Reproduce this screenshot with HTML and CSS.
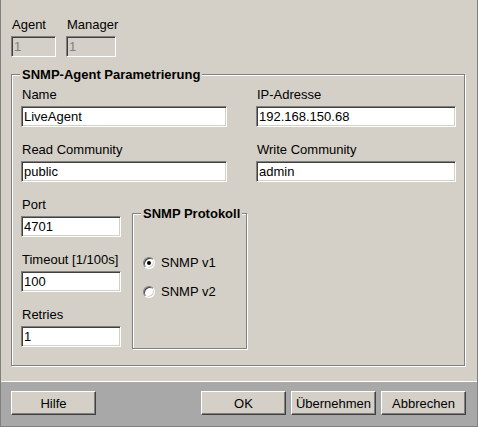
FILE: index.html
```html
<!DOCTYPE html>
<html>
<head>
<meta charset="utf-8">
<link rel="stylesheet" href="styles.css">
</head>
<body>
<div class="window">
  <div class="content">
    <div class="ids">
      <div class="field id-agent">
        <div class="label">Agent</div>
        <input class="input disabled" value="1" readonly>
      </div>
      <div class="field id-manager">
        <div class="label">Manager</div>
        <input class="input disabled" value="1" readonly>
      </div>
    </div>

    <div class="group main-group">
      <div class="group-title">SNMP-Agent Parametrierung</div>
      <div class="pair-grid">
        <div class="field">
          <div class="label">Name</div>
          <input class="input" value="LiveAgent" readonly>
        </div>
        <div class="field">
          <div class="label">IP-Adresse</div>
          <input class="input" value="192.168.150.68" readonly>
        </div>
        <div class="field">
          <div class="label">Read Community</div>
          <input class="input" value="public" readonly>
        </div>
        <div class="field">
          <div class="label">Write Community</div>
          <input class="input" value="admin" readonly>
        </div>
      </div>

      <div class="lower">
        <div class="left-col">
          <div class="field">
            <div class="label">Port</div>
            <input class="input" value="4701" readonly>
          </div>
          <div class="field">
            <div class="label">Timeout [1/100s]</div>
            <input class="input" value="100" readonly>
          </div>
          <div class="field">
            <div class="label">Retries</div>
            <input class="input" value="1" readonly>
          </div>
        </div>

        <div class="group proto-group">
          <div class="group-title">SNMP Protokoll</div>
          <div class="radio-row">
            <span class="radio"><span class="dot"></span></span>
            <span class="radio-label">SNMP v1</span>
          </div>
          <div class="radio-row">
            <span class="radio"></span>
            <span class="radio-label">SNMP v2</span>
          </div>
        </div>
      </div>
    </div>
  </div>

  <div class="buttonbar">
    <button class="btn">Hilfe</button>
    <div class="spacer"></div>
    <button class="btn">OK</button>
    <button class="btn">Übernehmen</button>
    <button class="btn">Abbrechen</button>
  </div>
</div>
</body>
</html>
```

FILE: styles.css
```css
html, body {
  margin: 0;
  padding: 0;
  background: #d4d0c8;
}

body {
  font-family: "Liberation Sans", Arial, sans-serif;
  font-size: 13px;
  color: #000;
}

.window {
  width: 478px;
  height: 427px;
  box-sizing: border-box;
  border-left: 1px solid #808080;
  border-right: 1px solid #808080;
  border-bottom: 1px solid #808080;
  display: flex;
  flex-direction: column;
  background: #d4d0c8;
}

.content {
  height: 381px;
  box-sizing: border-box;
  padding: 17px 0 0 10px;
}

.ids {
  display: flex;
  gap: 10px;
}

.field {
  display: flex;
  flex-direction: column;
}

.label {
  height: 15px;
  line-height: 15px;
  margin-bottom: 4px;
  padding-left: 1px;
  white-space: nowrap;
}

.input {
  height: 21px;
  box-sizing: border-box;
  margin: 0;
  padding: 0 0 0 2px;
  font-family: "Liberation Sans", Arial, sans-serif;
  font-size: 13px;
  color: #000;
  background: #fff;
  border: 1px solid;
  border-color: #808080 #ffffff #ffffff #808080;
  box-shadow: inset 1px 1px 0 #404040, inset -1px -1px 0 #d4d0c8;
  outline: none;
  width: 100%;
}

.input.disabled {
  background: #d4d0c8;
  color: #808080;
}

.id-agent { width: 45px; }
.id-manager { width: 50px; }

.group {
  position: relative;
  box-sizing: border-box;
  border: 1px solid #808080;
  box-shadow: inset 1px 1px 0 #ffffff, 1px 1px 0 #ffffff;
}

.group-title {
  position: absolute;
  top: -8px;
  left: 8px;
  padding: 0 2px;
  line-height: 15px;
  font-weight: bold;
  background: #d4d0c8;
  white-space: nowrap;
}

.main-group {
  margin-top: 17px;
  width: 454px;
  height: 292px;
  padding: 12px 7px 0 9px;
}

.pair-grid {
  display: grid;
  grid-template-columns: 206px 200px;
  column-gap: 29px;
  row-gap: 15px;
}

.lower {
  display: flex;
  align-items: flex-start;
  margin-top: 15px;
  gap: 11px;
}

.left-col {
  width: 100px;
  display: flex;
  flex-direction: column;
  gap: 15px;
}

.proto-group {
  margin-top: 16px;
  width: 115px;
  height: 136px;
  padding: 41px 0 0 10px;
  display: flex;
  flex-direction: column;
  gap: 14px;
}

.radio-row {
  display: flex;
  align-items: center;
  height: 15px;
  gap: 6px;
}

.radio {
  width: 12px;
  height: 12px;
  box-sizing: border-box;
  border-radius: 50%;
  border: 1px solid;
  border-color: #808080 #ffffff #ffffff #808080;
  box-shadow: inset 1px 1px 0 #404040, inset -1px -1px 0 #d4d0c8;
  background: #fff;
  display: flex;
  align-items: center;
  justify-content: center;
  flex: none;
}

.dot {
  width: 4px;
  height: 4px;
  border-radius: 50%;
  background: #000;
}

.radio-label {
  line-height: 15px;
}

.buttonbar {
  flex: 1;
  display: flex;
  align-items: flex-start;
  gap: 5px;
  box-sizing: border-box;
  border-top: 1px solid #ffffff;
  background: #a8a8a8;
  padding: 9px 11px 0 10px;
}

.spacer {
  flex: 1;
}

.btn {
  width: 85px;
  height: 24px;
  margin: 0;
  padding: 0;
  box-sizing: border-box;
  font-family: "Liberation Sans", Arial, sans-serif;
  font-size: 13px;
  color: #000;
  background: #d4d0c8;
  border: 1px solid;
  border-color: #ffffff #404040 #404040 #ffffff;
  box-shadow: inset -1px -1px 0 #808080;
}
```
